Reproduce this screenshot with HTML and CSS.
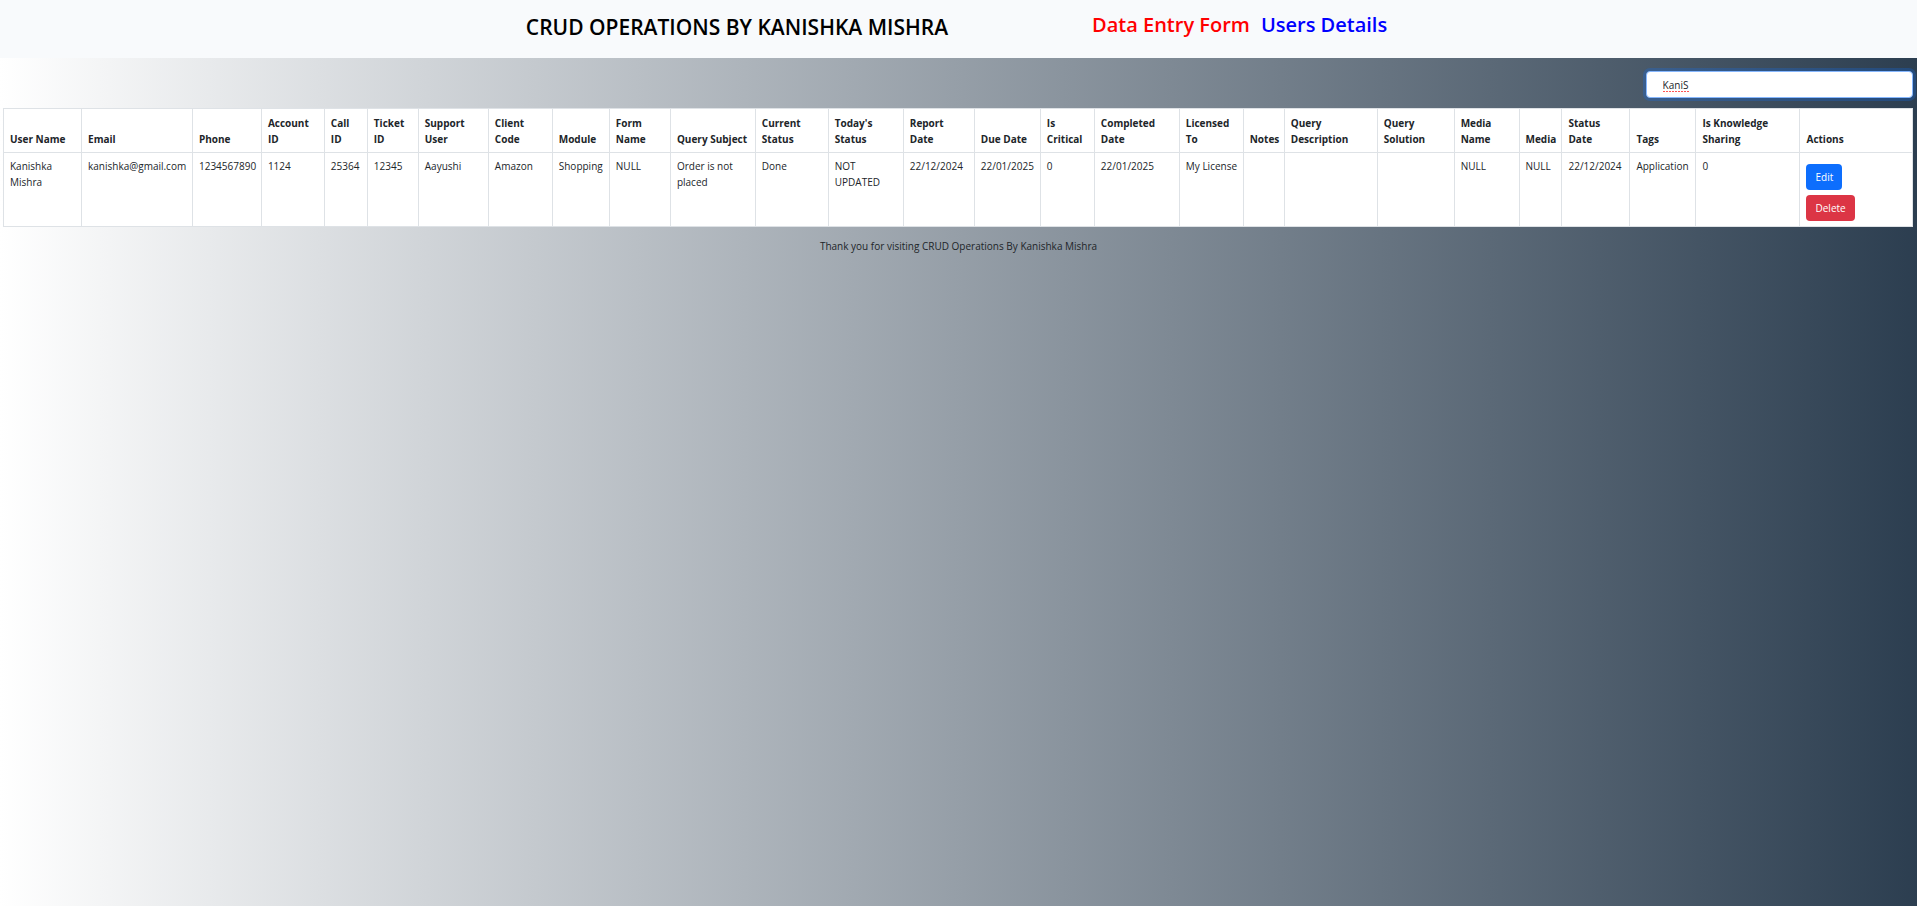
FILE: index.html
```html
<!DOCTYPE html>
<html lang="en">
<head>
<meta charset="utf-8">
<meta name="viewport" content="width=device-width, initial-scale=1">
<title>CRUD Operations</title>
<link rel="stylesheet" href="styles.css">
</head>
<body>
<header class="navbar">
  <h1 class="brand">CRUD OPERATIONS BY KANISHKA MISHRA</h1>
  <nav class="links">
    <a class="link link-form" href="#form">Data Entry Form</a>
    <a class="link link-users" href="#users">Users Details</a>
  </nav>
</header>
<main class="content">
  <div class="toolbar">
    <input class="search" type="text" value="KaniS" aria-label="Search users">
  </div>
  <table class="users">
    <thead>
      <tr>
        <th scope="col">User Name</th>
        <th scope="col">Email</th>
        <th scope="col">Phone</th>
        <th scope="col">Account ID</th>
        <th scope="col">Call<br>ID</th>
        <th scope="col">Ticket ID</th>
        <th scope="col">Support User</th>
        <th scope="col">Client Code</th>
        <th scope="col">Module</th>
        <th scope="col">Form Name</th>
        <th scope="col">Query Subject</th>
        <th scope="col">Current Status</th>
        <th scope="col">Today's Status</th>
        <th scope="col">Report<br>Date</th>
        <th scope="col">Due Date</th>
        <th scope="col">Is Critical</th>
        <th scope="col">Completed Date</th>
        <th scope="col">Licensed To</th>
        <th scope="col">Notes</th>
        <th scope="col">Query Description</th>
        <th scope="col">Query Solution</th>
        <th scope="col">Media Name</th>
        <th scope="col">Media</th>
        <th scope="col">Status Date</th>
        <th scope="col">Tags</th>
        <th scope="col">Is Knowledge Sharing</th>
        <th scope="col">Actions</th>
      </tr>
    </thead>
    <tbody>
      <tr>
        <td>Kanishka Mishra</td>
        <td>kanishka@gmail.com</td>
        <td>1234567890</td>
        <td>1124</td>
        <td>25364</td>
        <td>12345</td>
        <td>Aayushi</td>
        <td>Amazon</td>
        <td>Shopping</td>
        <td>NULL</td>
        <td>Order is not placed</td>
        <td>Done</td>
        <td>NOT UPDATED</td>
        <td>22/12/2024</td>
        <td>22/01/2025</td>
        <td>0</td>
        <td>22/01/2025</td>
        <td>My License</td>
        <td></td>
        <td></td>
        <td></td>
        <td>NULL</td>
        <td>NULL</td>
        <td>22/12/2024</td>
        <td>Application</td>
        <td>0</td>
        <td>
          <div class="actions">
            <button class="btn btn-edit" type="button">Edit</button>
            <button class="btn btn-delete" type="button">Delete</button>
          </div>
        </td>
      </tr>
    </tbody>
  </table>
</main>
<footer class="footer">Thank you for visiting CRUD Operations By Kanishka Mishra</footer>
</body>
</html>
```
FILE: styles.css
```css
*, *::before, *::after { box-sizing: border-box; }

body {
  margin: 0;
  min-height: 100vh;
  background: linear-gradient(to right, #ffffff, #2c3e50);
  color: #212529;
  font-family: "Open Sans", "Noto Sans", sans-serif;
  font-size: 10px;
  line-height: 16px;
}

.navbar {
  display: flex;
  justify-content: center;
  gap: 144px;
  padding: 10px 4px 16px 0;
  background: #f8fafc;
}

.brand {
  margin: 0;
  padding-top: 2px;
  color: #000;
  font-size: 21px;
  font-weight: 600;
  line-height: 30px;
}

.links { display: flex; gap: 11px; }

.link {
  font-size: 20px;
  font-weight: 600;
  line-height: 30px;
  text-decoration: none;
}
.link-form { color: #f00; }
.link-users { color: #00f; }

.content { padding: 13px 4px 0 3px; }

.toolbar {
  display: flex;
  justify-content: flex-end;
  padding-bottom: 10px;
}

.search {
  width: 14%;
  height: 27px;
  padding: 4px 16px;
  border: 1px solid #86b7fe;
  border-radius: 4px;
  /* dashed spelling mark under the typed word */
  background: #fff repeating-linear-gradient(to right, #f55 0 2px, transparent 2px 3px) 16px 19px / 26px 1px no-repeat;
  box-shadow: 0 0 0 3px rgba(13, 110, 253, .25);
  color: #212529;
  font: inherit;
  outline: 0;
}

.users {
  width: 100%;
  table-layout: fixed;
  border-collapse: collapse;
  background: #fff;
}

.users th,
.users td {
  padding: 5px 3px 5px 6px;
  border: 1px solid #dee2e6;
  text-align: left;
}
.users th { padding-top: 6px; font-weight: 700; vertical-align: bottom; }
.users td { vertical-align: top; }

.users th:nth-child(1) { width: 4.09%; }
.users th:nth-child(2) { width: 5.81%; }
.users th:nth-child(3) { width: 3.61%; }
.users th:nth-child(4) { width: 3.3%; }
.users th:nth-child(5) { width: 2.25%; }
.users th:nth-child(6) { width: 2.67%; }
.users th:nth-child(7) { width: 3.67%; }
.users th:nth-child(8) { width: 3.35%; }
.users th:nth-child(9) { width: 2.99%; }
.users th:nth-child(10) { width: 3.2%; }
.users th:nth-child(11) { width: 4.45%; }
.users th:nth-child(12) { width: 3.82%; }
.users th:nth-child(13) { width: 3.93%; }
.users th:nth-child(14) { width: 3.72%; }
.users th:nth-child(15) { width: 3.46%; }
.users th:nth-child(16) { width: 2.83%; }
.users th:nth-child(17) { width: 4.45%; }
.users th:nth-child(18) { width: 3.35%; }
.users th:nth-child(19) { width: 2.15%; }
.users th:nth-child(20) { width: 4.87%; }
.users th:nth-child(21) { width: 4.03%; }
.users th:nth-child(22) { width: 3.4%; }
.users th:nth-child(23) { width: 2.25%; }
.users th:nth-child(24) { width: 3.56%; }
.users th:nth-child(25) { width: 3.46%; }
.users th:nth-child(26) { width: 5.45%; }

.actions {
  display: flex;
  flex-direction: column;
  align-items: flex-start;
  gap: 5px;
  padding-top: 6px;
}

.btn {
  padding: 5px 9px;
  border: 0;
  border-radius: 4px;
  color: #fff;
  font: inherit;
  cursor: pointer;
}
.btn-edit { background: #0d6efd; }
.btn-delete { background: #dc3545; }

.footer { padding: 11px 0; text-align: center; }
```
